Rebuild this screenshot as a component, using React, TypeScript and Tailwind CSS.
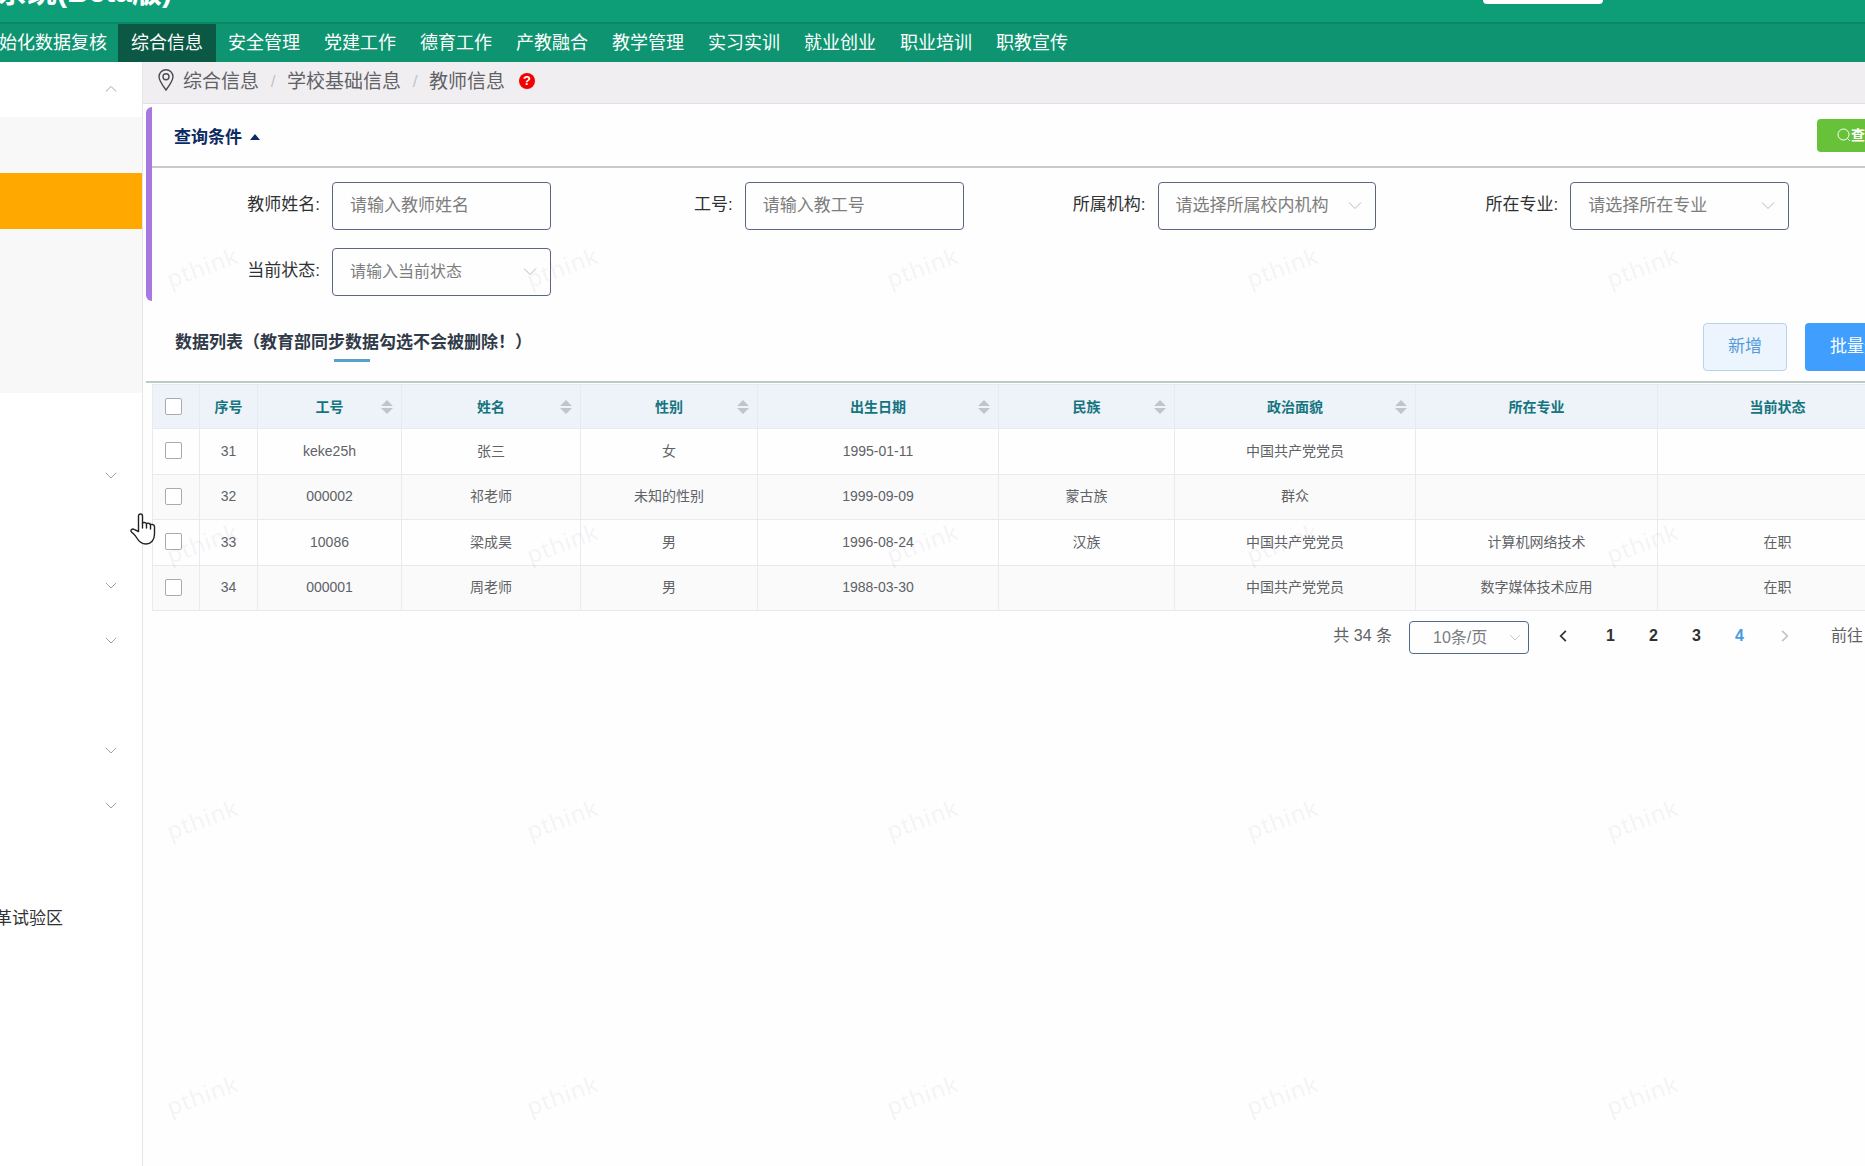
import React from "react";

type Field = { id: string; label: string; placeholder: string; kind: "input" | "select"; size: string };

const navItems = ["综合信息", "安全管理", "党建工作", "德育工作", "产教融合", "教学管理", "实习实训", "就业创业", "职业培训", "职教宣传"];

const fields: Field[] = [
  { id: "name", label: "教师姓名:", placeholder: "请输入教师姓名", kind: "input", size: "text-[17px]" },
  { id: "no", label: "工号:", placeholder: "请输入教工号", kind: "input", size: "text-[17px]" },
  { id: "org", label: "所属机构:", placeholder: "请选择所属校内机构", kind: "select", size: "text-[17px]" },
  { id: "major", label: "所在专业:", placeholder: "请选择所在专业", kind: "select", size: "text-[17px]" },
  { id: "status", label: "当前状态:", placeholder: "请输入当前状态", kind: "select", size: "text-[16px]" },
];

const columns = [
  { title: "序号", sort: false, width: "w-[58px]" },
  { title: "工号", sort: true, width: "w-[144px]" },
  { title: "姓名", sort: true, width: "w-[179px]" },
  { title: "性别", sort: true, width: "w-[177px]" },
  { title: "出生日期", sort: true, width: "w-[241px]" },
  { title: "民族", sort: true, width: "w-[176px]" },
  { title: "政治面貌", sort: true, width: "w-[241px]" },
  { title: "所在专业", sort: false, width: "w-[242px]" },
  { title: "当前状态", sort: false, width: "w-[240px]" },
];

const rows = [
  ["31", "keke25h", "张三", "女", "1995-01-11", "", "中国共产党党员", "", ""],
  ["32", "000002", "祁老师", "未知的性别", "1999-09-09", "蒙古族", "群众", "", ""],
  ["33", "10086", "梁成昊", "男", "1996-08-24", "汉族", "中国共产党党员", "计算机网络技术", "在职"],
  ["34", "000001", "周老师", "男", "1988-03-30", "", "中国共产党党员", "数字媒体技术应用", "在职"],
];

const menuBelow = ["", "down", "", "down", "down", "", "down", "down", ""];

function Chevron({ dir = "down", className = "" }: { dir?: "down" | "up" | "left" | "right"; className?: string }) {
  const d = {
    down: "M1 4.5 7 10.5 13 4.5",
    up: "M1 10 7 4 13 10",
    left: "M9.5 2.5 5 7 9.5 11.5",
    right: "M4.5 2.5 9 7 4.5 11.5",
  }[dir];
  return (
    <svg viewBox="0 0 14 14" fill="none" stroke="currentColor" className={className} aria-hidden="true">
      <path d={d} />
    </svg>
  );
}

function Header() {
  return (
    <header className="bg-[#0e9470] text-white">
      <div className="flex h-6 items-start justify-between overflow-hidden border-b-2 border-[#0b8765] bg-[#0d9d77]">
        <h1 className="-mt-[26px] -ml-[3px] text-[30px] leading-9 font-bold whitespace-nowrap">系统(Beta版)</h1>
        <div className="mr-[262px] h-1 w-[120px] rounded-b bg-white" />
      </div>
      <nav className="flex h-[38px] items-stretch overflow-hidden text-[18px] leading-[38px] whitespace-nowrap">
        <a href="#init" className="-ml-px pr-[11px]">始化数据复核</a>
        {navItems.map((item, i) => (
          <a key={item} href={"#" + i} className={i === 0 ? "bg-[#0b5844] px-[13px]" : "px-3"}>
            {item}
          </a>
        ))}
      </nav>
    </header>
  );
}

const menuRow = "flex h-[55px] w-full items-center justify-end pr-[25px] pb-0.5 text-[#909399]";

function Sidebar() {
  return (
    <aside className="w-[143px] shrink-0 overflow-hidden border-r border-[#e6e6e9] bg-white text-[#303133]">
      <button type="button" aria-label="收起" className={menuRow}>
        <Chevron dir="up" className="h-3 w-3" />
      </button>
      <div className="bg-[#f8f8f8]">
        <div className="h-14" />
        <div className="h-14 bg-[#ffa800]" />
        <div className="h-41" />
      </div>
      {menuBelow.map((m, i) =>
        m ? (
          <button key={i} type="button" aria-label="展开" className={menuRow}>
            <Chevron className="h-3 w-3" />
          </button>
        ) : (
          <div key={i} className="h-[55px]" />
        ),
      )}
      <a href="#zone" className="-ml-[5px] block text-[17px] leading-[61px] whitespace-nowrap">革试验区</a>
    </aside>
  );
}

function Breadcrumb() {
  return (
    <div className="flex h-[42px] items-center border-b border-[#e4e0e4] bg-[#f1eef1] pb-0.5 pl-[14px] text-[19px] leading-7 text-[#606266]">
      <svg viewBox="0 0 18 24" className="mr-2 mb-1 h-6 w-[18px]" fill="none" stroke="#4a4c52" strokeWidth="1.4" aria-hidden="true">
        <path d="M9 22C5 16.500 2 12.500 2 8.700a7 7 0 0 1 14 0C16 12.500 13 16.500 9 22Z" />
        <circle cx="9" cy="8.700" r="3" />
      </svg>
      <a href="#a">综合信息</a>
      <span className="w-7 text-center text-[17px] text-[#c0c4cc]">/</span>
      <a href="#b">学校基础信息</a>
      <span className="w-7 text-center text-[17px] text-[#c0c4cc]">/</span>
      <a href="#c">教师信息</a>
      <span className="mb-0.5 ml-[14px] flex h-4 w-4 items-center justify-center rounded-full bg-[#f40000] text-[13px] leading-4 font-bold text-white">?</span>
    </div>
  );
}

function QueryPanel() {
  return (
    <section className="mt-[3px] ml-[3px] rounded-l-md border-l-6 border-[#a877e0]">
      <div className="flex h-[61px] items-center justify-between overflow-hidden border-b-2 border-[#c9c9cb]">
        <h2 className="flex items-center gap-2 pt-0.5 pl-[22px] text-[17px] leading-6 font-bold text-[#0d2a63]">
          查询条件
          <svg viewBox="0 0 10 6" className="mb-0.5 h-1.5 w-2.5" fill="currentColor" aria-hidden="true">
            <path d="M0 6 5 0l5 6z" />
          </svg>
        </h2>
        <button type="button" className="-mr-[42px] mb-0.5 flex h-[33px] w-[90px] items-center rounded bg-[#67c23a] pb-0.5 pl-5 text-[14px] leading-5 font-bold whitespace-nowrap text-white">
          <svg viewBox="0 0 14 14" className="h-3.5 w-3.5" fill="none" stroke="currentColor" aria-hidden="true">
            <circle cx="6.500" cy="6.500" r="5.500" />
            <path d="m10.500 10.500 2.500 2.500" />
          </svg>
          查询
        </button>
      </div>
      <form className="grid grid-cols-4 gap-y-[18px] pt-[14px] pb-[5px] pl-[62px]">
        {fields.map((f) => (
          <div key={f.id} className="flex items-start">
            <label htmlFor={f.id} className="w-[118px] shrink-0 pr-3 text-right text-[17px] leading-[46px] text-[#303133]">
              {f.label}
            </label>
            <div className="relative mr-[76px] flex-1">
              {f.kind === "input" ? (
                <input
                  id={f.id}
                  placeholder={f.placeholder}
                  className="h-12 w-full rounded border border-[#5b6782] bg-transparent pl-[17px] text-[17px] placeholder:text-[#7d7d7d]"
                />
              ) : (
                <>
                  <select id={f.id} className={"h-12 w-full appearance-none rounded border border-[#5b6782] bg-transparent pl-[17px] text-[#7d7d7d] " + f.size}>
                    <option>{f.placeholder}</option>
                  </select>
                  <Chevron className="pointer-events-none absolute top-4 right-[14px] h-3.5 w-3.5 text-[#b4b8c0]" />
                </>
              )}
            </div>
          </div>
        ))}
      </form>
    </section>
  );
}

function SortIcon() {
  return (
    <svg viewBox="0 0 12 14" className="mr-2 h-3.5 w-3 justify-self-end" fill="#c0c4cc" aria-hidden="true">
      <path d="M0 6 6 0l6 6zM0 8h12l-6 6z" />
    </svg>
  );
}

const checkbox = "block h-[17px] w-[17px] appearance-none rounded-[2px] border border-[#a9abb0] bg-white";

function DataTable() {
  return (
    <div className="mt-px ml-[9px] overflow-hidden">
      <table className="w-full min-w-[1745px] table-fixed border-collapse border border-[#e9e9f0] text-center text-[14px] leading-5 text-[#606266]">
        <thead className="bg-[#eef2f9] text-[#14757f]">
          <tr className="h-[44px]">
            <th className="w-[47px] border border-[#e6eaf3] pl-3">
              <input type="checkbox" aria-label="全选" className={checkbox} />
            </th>
            {columns.map((c) => (
              <th key={c.title} className={"border border-[#e6eaf3] font-bold " + c.width}>
                <div className="grid grid-cols-[1fr_auto_1fr] items-center">
                  <span />
                  <span>{c.title}</span>
                  {c.sort && <SortIcon />}
                </div>
              </th>
            ))}
          </tr>
        </thead>
        <tbody>
          {rows.map((r, i) => (
            <tr key={r[0]} className={i % 2 ? "h-[45px] bg-[#fafafb]" : "h-[46px]"}>
              <td className="border border-[#e9e9f0] pb-0.5 pl-3">
                <input type="checkbox" aria-label={"选择 " + r[0]} className={checkbox} />
              </td>
              {r.map((v, j) => (
                <td key={j} className="border border-[#e9e9f0] pb-0.5">{v}</td>
              ))}
            </tr>
          ))}
        </tbody>
      </table>
    </div>
  );
}

function Pagination() {
  return (
    <div className="mt-[10px] flex h-[33px] items-center justify-end overflow-hidden text-[16px] leading-6 whitespace-nowrap text-[#606266]">
      <span className="mr-[17px] pb-1">共 34 条</span>
      <div className="relative h-[33px] w-[120px]">
        <select aria-label="每页条数" className="h-full w-full appearance-none rounded border border-[#4f6a8a] bg-transparent pl-[23px] text-[16px] text-[#7a7c80]">
          <option>10条/页</option>
        </select>
        <Chevron className="pointer-events-none absolute top-2.5 right-2 h-3 w-3 text-[#c0c4cc]" />
      </div>
      <div className="ml-[22px] flex items-center pb-1 text-center font-bold text-[#303133]">
        <button type="button" aria-label="上一页" className="flex w-6 justify-center">
          <Chevron dir="left" className="h-4 w-4 stroke-[1.5]" />
        </button>
        <div className="ml-[14px] flex">
          {["1", "2", "3", "4"].map((n) => (
            <button key={n} type="button" className={n === "4" ? "w-[43px] text-[#4a9ae0]" : "w-[43px]"}>
              {n}
            </button>
          ))}
        </div>
        <button type="button" aria-label="下一页" className="ml-3 flex w-6 justify-center text-[#c0c4cc]">
          <Chevron dir="right" className="h-4 w-4 stroke-[1.5]" />
        </button>
      </div>
      <span className="ml-[34px] w-[34px] pb-1">前往</span>
    </div>
  );
}

function Watermark() {
  return (
    <div className="pointer-events-none absolute inset-0 overflow-hidden" aria-hidden="true">
      <div className="grid auto-rows-[276px] grid-cols-[repeat(5,360px)] pt-[67px] pl-[22px]">
        {Array.from({ length: 20 }, (_, i) => (
          <div key={i} className="pt-[122px]">
            <span className="inline-block -rotate-20 font-['Noto_Sans'] text-[24px] leading-8 font-medium text-[#70508a]/[0.06]">pthink</span>
          </div>
        ))}
      </div>
    </div>
  );
}

export default function App() {
  return (
    <div className="relative flex h-screen flex-col overflow-hidden bg-[#fefefe] font-['Liberation_Sans','Noto_Sans_CJK_SC',sans-serif]">
      <Header />
      <div className="flex flex-1">
        <Sidebar />
        <main className="relative min-w-0 flex-1 overflow-hidden">
          <Breadcrumb />
          <QueryPanel />
          <section>
            <div className="ml-[3px] flex h-[82px] items-start justify-between overflow-hidden border-b-2 border-[#bccbc9] pt-[22px]">
              <h2 className="flex flex-col items-center pt-2 pl-[29px] text-[17px] leading-6 font-bold text-[#303a48]">
                数据列表（教育部同步数据勾选不会被删除！）
                <span className="mt-1 mr-1 h-[3px] w-9 bg-[#55a3cd]" />
              </h2>
              <div className="-mr-[58px] flex gap-[18px] text-[17px] leading-6 whitespace-nowrap">
                <button type="button" className="h-12 w-[84px] rounded border border-[#b7d3ec] bg-[#ecf4fe] text-[#559bd9]">新增</button>
                <button type="button" className="h-12 rounded bg-[#409eff] px-[25px] text-white">批量删除</button>
              </div>
            </div>
            <DataTable />
            <Pagination />
          </section>
          <Watermark />
        </main>
      </div>
      <svg viewBox="0 0 26 32" className="absolute top-[513px] left-[130px] h-8 w-[26px]" fill="#fff" stroke="#222" strokeWidth="1.4" strokeLinejoin="round" strokeLinecap="round" aria-hidden="true">
        <path d="M8.500 18.500V3a2 2 0 0 1 4 0v7.500c0-1.500 4-1.500 4 .5 0-1.300 4-1.200 4 1 0-1 4-1 4 1.500V21c0 6-3.500 10-8.500 10-4.500 0-7.500-3-9.500-6.500-1.500-2.500-3.500-4-5-5.500-1.500-1.800.5-3.500 2.500-2.700z" />
        <path d="M12.500 10.500v4.500M16.500 11v4M20.500 12v4" />
      </svg>
    </div>
  );
}
